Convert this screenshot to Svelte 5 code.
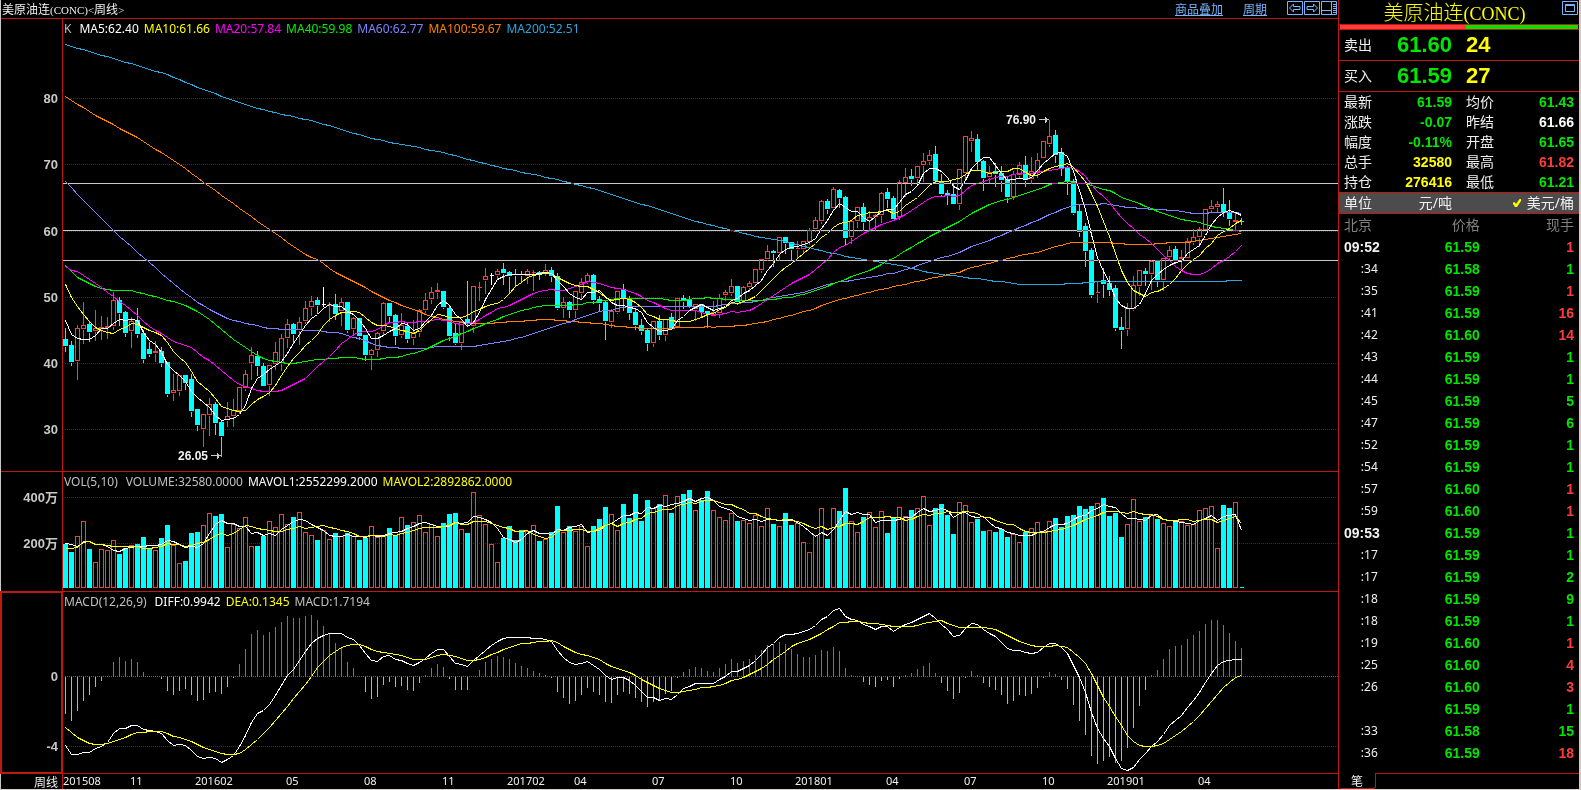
<script>
	const STEP = 6;
	const PRICE_TOP = 19;

	// one bar per week: direction (u, d, or w for unchanged), then high, body top, body bottom, low
	const bars = `
		d327,339,346,351 d340,345,362,365 u324,328,361,379 u301,325,329,343 d320,324,332,341 u309,328,331,340 u315,327,329,339
		u316,326,328,338 u291,300,326,329 d296,300,313,325 d310,312,333,336 u316,321,331,347 d307,320,334,337 d329,333,359,362
		d341,349,354,356 u340,351,353,361 d346,351,363,366 d362,362,394,396 u373,390,393,400 u375,375,391,395 d375,375,383,389
		d373,379,411,416 d408,409,425,430 u413,414,429,446 u397,404,415,435 d401,404,423,434 d420,422,436,456 u401,416,420,426
		u398,410,416,426 u387,387,411,413 u369,374,388,390 u346,355,363,379 d350,356,366,375 d362,366,386,386 u364,365,385,395
		u341,352,364,369 u333,338,363,370 u318,324,338,347 d322,324,334,342 u316,322,330,344 u300,308,321,323 u295,301,307,315
		d296,300,305,313 w286,304,304,306 u301,304,304,321 d293,304,314,319 u297,302,311,325 d301,302,330,332 u316,318,329,335
		d318,318,336,339 d334,335,355,360 u348,350,355,369 u331,333,350,356 u301,303,331,334 d303,303,316,321 d313,315,336,344
		u312,325,335,337 d321,326,339,342 u319,332,338,344 u308,310,332,336 u292,300,310,312 u286,292,299,303 u282,290,292,298
		d290,291,307,308 d304,308,336,340 d322,333,343,344 u320,321,343,349 d280,319,323,326 u285,286,326,332 u281,287,287,300
		u267,276,280,293 w272,275,275,284 u268,271,275,278 d262,269,273,284 d270,272,276,293 d268,274,275,286 d270,274,275,282
		u268,271,276,283 u269,272,272,290 d270,272,274,279 u263,270,273,275 d266,270,276,281 d272,276,308,309 u296,302,308,317
		d300,302,310,317 u291,291,310,317 u277,282,293,298 u272,275,282,283 d273,275,300,303 d295,299,303,310 d300,302,321,339
		u308,311,322,327 u291,291,312,313 d283,289,298,310 d295,298,313,319 d308,312,325,329 d318,325,331,334 d328,330,343,350
		u321,321,343,346 d314,321,335,339 u318,319,335,340 d312,317,328,329 u298,298,327,327 d294,298,301,308 d295,299,306,307
		u303,304,309,320 d303,304,312,316 d310,311,314,327 u300,312,316,316 u293,298,313,317 u289,292,295,300 u278,286,293,295
		d285,286,302,304 u285,287,301,302 u280,283,287,291 u269,269,283,286 u259,259,270,272 u244,251,259,260 d249,251,253,266
		u237,237,253,260 d237,237,243,253 d241,242,249,259 u240,248,249,257 u240,241,249,252 u227,230,242,244 u216,220,229,231
		u199,201,221,223 d198,201,209,213 u186,189,208,210 d188,190,198,207 d195,197,238,244 u219,221,237,243 u206,207,221,227
		d202,207,222,230 u210,217,221,230 u213,215,217,230 u191,193,215,222 d187,192,199,207 d195,198,219,219 u179,182,217,219
		u167,177,183,196 d168,176,179,185 u165,166,178,183 u152,161,165,181 u149,155,161,164 d145,154,181,182 d173,181,194,195
		d189,193,195,204 d183,194,204,204 u168,169,204,209 u135,136,173,180 u130,138,141,151 d133,139,162,169 d159,161,178,190
		u165,172,177,182 d162,171,174,186 d165,173,180,191 d175,179,197,202 u170,174,197,199 u161,165,175,177 d155,165,180,186
		u156,171,179,183 u152,160,172,177 u140,141,158,158 u119,136,144,146 d129,135,155,162 d147,152,168,175 d165,167,181,194
		d178,181,213,214 d203,211,232,236 d222,226,251,266 d247,250,295,297 u280,292,293,302 d267,280,284,297 d275,283,290,295
		d284,288,328,330 d316,327,330,348 u302,308,329,335 u275,285,309,310 u269,270,286,295 d267,271,274,285 u259,261,274,289
		d260,260,280,286 u258,258,280,290 u245,250,257,260 d245,249,261,263 u249,257,259,268 u237,241,258,258 u228,237,242,244
		u226,229,237,246 u208,209,230,230 u199,206,209,211 u200,204,207,212 d187,204,212,216 d199,212,219,225 u212,220,222,230
		d217,221,221,224`
		.trim()
		.split(/\s+/)
		.map((s) => {
			const [high, top, bottom, low] = s.slice(1).split(',').map(Number);
			return { dir: s[0], high, top, bottom, low };
		});

	// volume and MACD levels are stored at three units per pixel
	const volume = [
		222, 246, 199, 154, 237, 277, 238, 240, 211, 252, 234, 225, 222, 201, 236, 241, 204, 165, 226, 280, 273, 189, 186, 166, 130,
		138, 132, 232, 163, 175, 142, 229, 228, 198, 154, 172, 133, 163, 141, 127, 187, 196, 210, 180, 208, 189, 199, 189, 199, 210,
		204, 169, 202, 196, 174, 195, 142, 165, 157, 136, 187, 163, 199, 159, 132, 129, 178, 189, 67, 136, 163, 223, 277, 204, 168,
		210, 181, 182, 166, 213, 208, 186, 108, 187, 168, 184, 168, 229, 168, 147, 111, 133, 181, 102, 144, 72, 153, 90, 114, 102,
		76, 129, 79, 72, 60, 121, 90, 63, 121, 142, 151, 130, 153, 151, 160, 136, 169, 115, 162, 169, 129, 165, 160, 217, 247,
		196, 115, 207, 115, 123, 54, 154, 187, 141, 127, 172, 124, 189, 144, 112, 139, 120, 115, 79, 166, 114, 102, 135, 192, 97,
		106, 157, 147, 183, 181, 186, 177, 201, 193, 217, 186, 175, 157, 184, 154, 144, 171, 138, 135, 108, 117, 108, 100, 84, 138,
		129, 201, 163, 88, 154, 141, 136, 147, 160, 169, 153, 154, 166, 163, 121, 115, 109, 235, 105, 114, 97, 351
	];

	const macd = [
		729, 750, 720, 690, 672, 648, 630, 615, 573, 558, 570, 564, 573, 603, 615, 618, 624, 660, 672, 660, 654, 672, 690, 687, 666,
		663, 669, 648, 620, 579, 534, 489, 477, 492, 483, 468, 453, 435, 441, 441, 435, 432, 447, 465, 486, 516, 528, 573, 591, 618,
		663, 684, 678, 642, 633, 648, 645, 657, 660, 636, 612, 591, 579, 588, 624, 657, 657, 657, 618, 597, 573, 564, 555, 558, 564,
		576, 585, 591, 600, 606, 612, 621, 663, 681, 699, 690, 672, 651, 663, 672, 693, 696, 672, 663, 669, 681, 693, 708, 693, 690,
		669, 660, 620, 603, 594, 588, 591, 600, 603, 591, 579, 564, 576, 570, 564, 552, 537, 522, 519, 513, 519, 534, 549, 558, 558,
		552, 537, 540, 528, 540, 591, 612, 615, 633, 642, 648, 630, 627, 648, 624, 612, 606, 594, 585, 576, 606, 636, 660, 684, 666,
		621, 600, 612, 636, 648, 657, 672, 699, 690, 672, 675, 669, 651, 621, 603, 609, 627, 654, 702, 750, 792, 855, 879, 870, 858,
		876, 870, 831, 771, 705, 657, 612, 597, 564, 534, 525, 522, 504, 492, 480, 459, 447, 447, 462, 486, 510, 531
	];

	const diffKnots =
		'0:825 1:853 2:853 3:847 4:845 5:835 6:829 7:817 8:790 9:775 10:775 11:766 12:764 13:778 14:781 15:784 16:790 17:810 18:826 19:823 20:825 21:840 22:859 23:865 24:862 25:865 26:877 27:868 28:856 29:829 30:795 31:755 32:730 33:721 34:703 35:676 36:646 37:614 38:597 39:571 40:543 41:519 42:504 43:495 44:490 46:488 47:502 48:508 49:525 50:550 51:571 52:574 53:559 54:556 55:568 56:571 57:580 58:586 59:577 60:565 61:550 62:538 63:538 64:559 65:580 66:583 67:589 68:570 69:556 70:539 71:526 72:514 73:505 74:502 77:502 80:506 81:512 82:541 83:560 84:577 85:583 86:580 87:574 88:585 89:598 90:616 91:628 92:622 93:622 94:631 95:645 96:664 97:682 98:682 99:691 100:685 101:688 102:672 103:655 104:649 105:640 108:640 109:628 110:619 111:604 112:604 113:595 114:586 115:571 116:553 117:532 118:520 119:502 120:493 122:490 124:478 125:466 126:448 127:439 128:421 129:415 130:439 131:448 132:451 133:463 134:469 135:478 136:469 137:469 138:484 139:472 140:463 141:457 142:448 143:439 144:430 145:443 146:461 147:478 148:499 149:496 150:475 151:460 152:463 153:478 154:490 155:499 156:515 157:535 158:541 159:541 160:547 161:550 162:547 163:532 164:520 165:520 166:532 167:550 168:586 169:622 170:667 171:727 172:775 173:803 174:829 175:865 176:894 177:901 178:892 179:868 180:850 181:828 182:814 183:793 184:766 185:751 186:736 187:712 188:691 189:667 190:637 191:610 192:586 193:574 194:571 195:568 196:568';
	const deaKnots =
		'0:771 2:802 3:811 4:818 6:823 7:820 8:814 10:802 11:793 12:787 14:784 16:784 17:790 18:799 19:802 21:814 23:832 26:850 28:853 29:850 30:838 32:808 35:751 38:685 40:642 42:592 44:556 46:532 47:526 48:523 49:523 50:528 51:538 52:544 56:554 58:568 60:568 62:556 63:553 65:559 67:571 69:568 71:553 73:538 76:520 79:514 81:511 82:516 84:538 86:553 87:556 89:568 91:589 94:606 95:616 97:637 99:655 101:667 102:667 105:658 106:652 108:649 109:646 111:631 112:628 113:622 116:595 118:568 121:529 122:520 124:508 126:490 127:478 129:457 131:454 132:452 136:463 137:464 138:469 140:469 142:464 143:458 146:451 147:458 149:472 153:472 155:478 158:505 161:526 163:529 165:526 167:532 168:545 169:560 170:580 171:610 173:680 175:737 177:795 178:814 179:826 181:829 182:826 183:820 184:808 186:784 188:754 189:736 191:694 193:652 195:622 196:614';

	const px = (i) => 2 + i * STEP;

	// "index:level" pairs, straight lines between them
	function expand(knots) {
		const pts = knots.split(' ').map((k) => k.split(':').map(Number));
		const out = [];
		for (let k = 0; k < pts.length - 1; k++) {
			const [a, ya] = pts[k];
			const [b, yb] = pts[k + 1];
			for (let i = a; i < b; i++) out[i] = ya + ((yb - ya) * (i - a)) / (b - a);
		}
		out.push(pts[pts.length - 1][1]);
		return out;
	}

	// moving average; the lead-in covers weeks that lack enough history
	function average(values, n, leadIn) {
		const start = expand(leadIn);
		return values.map((_, i) => {
			if (i < n - 1) return start[i];
			let sum = 0;
			for (let j = i - n + 1; j <= i; j++) sum += values[j];
			return sum / n;
		});
	}

	function line(values, toY) {
		return values.map((v, i) => `${px(i)},${Math.round(toY(v))}`).join(' ');
	}

	const priceY = (v) => v - PRICE_TOP;
	const volumeY = (v) => v / 3 - 2;
	const macdY = (v) => v / 3 - 122;

	function wicks(dir) {
		return bars
			.map((b, i) =>
				b.dir === dir
					? `M${px(i)} ${priceY(b.high)}V${priceY(b.top)}M${px(i)} ${priceY(b.bottom)}V${priceY(b.low)}`
					: ''
			)
			.join('');
	}

	function bodies(dir) {
		return bars
			.map((b, i) =>
				b.dir === dir
					? `M${px(i) - 2} ${priceY(b.top)}H${px(i) + 2}V${priceY(Math.max(b.top, b.bottom - 1))}H${px(i) - 2}Z`
					: ''
			)
			.join('');
	}

	function volumeBars(down) {
		return volume
			.map((v, i) =>
				(bars[i].dir === 'd') === down
					? `M${px(i) - 2} ${Math.round(volumeY(v))}H${px(i) + 2}V115H${px(i) - 2}Z`
					: ''
			)
			.join('');
	}

	function macdBars(down) {
		return macd
			.map((v, i) => (v > 619 === down ? `M${px(i)} 84V${Math.round(macdY(v))}` : ''))
			.join('');
	}

	const closes = bars.map((b) => (b.dir === 'd' ? b.bottom : b.top));

	const averages = [
		{
			label: 'MA200:52.51',
			color: '#2aa5dc',
			points: line(
				expand(
					'0:44 4:51 8:58 13:67 17:74 20:82 24:91 28:100 31:106 36:114 41:120 46:129 51:138 56:144 63:152 71:165 84:182 89:190 104:219 112:231 116:237 120:241 123:246 128:253 132:258 139:265 144:272 150:277 157:282 159:284 164:284 168:283 173:281 190:281 196:280'
				),
				priceY
			)
		},
		{
			label: 'MA100:59.67',
			color: '#ff8000',
			points: line(
				average(closes, 100, '0:96 5:115 12:137 19:164 24:186 30:212 34:229 40:254 42:259 45:272 49:284 53:297 56:305 59:311 61:316 64:320 67:323 70:323 75:321 80:319 85:321 90:324 94:327 98:328'),
				priceY
			)
		},
		{
			label: 'MA60:62.77',
			color: '#8080ff',
			points: line(
				average(closes, 60, '0:181 4:206 8:230 10:241 14:262 18:283 22:302 26:315 28:320 32:325 34:328 38:329 42:330 46:333 50:340 52:345 56:348 58:348'),
				priceY
			)
		},
		{
			label: 'MA40:59.98',
			color: '#00f000',
			points: line(
				average(closes, 40, '0:265 1:271 2:277 4:283 6:288 8:290 11:290 15:296 19:303 20:305 22:311 24:319 26:329 28:339 30:347 32:355 34:360 36:362 38:363'),
				priceY
			)
		},
		{
			label: 'MA20:57.84',
			color: '#ff00ff',
			points: line(
				average(closes, 20, '0:266 1:270 2:271 4:279 6:287 8:296 10:305 12:315 14:326 16:333 18:341'),
				priceY
			)
		},
		{
			label: 'MA10:61.66',
			color: '#ffff00',
			points: line(average(closes, 10, '0:284 1:297 2:306 3:314 4:321 5:327 6:330 7:332 8:333'), priceY)
		},
		{
			label: 'MA5:62.40',
			color: '#ffffff',
			points: line(average(closes, 5, '0:320 1:334 2:338 3:339'), priceY)
		}
	];
	const legend = [...averages].reverse();

	const mavol1 = line(average(volume, 5, '0:220 1:222 2:228 3:215'), volumeY);
	const mavol2 = line(average(volume, 10, '0:235 1:235 2:230 3:214 4:214 5:221 6:223 7:225 8:228'), volumeY);
	const diff = line(expand(diffKnots), macdY);
	const dea = line(expand(deaKnots), macdY);

	const priceTicks = [
		{ label: '80', y: 79 },
		{ label: '70', y: 145 },
		{ label: '60', y: 212 },
		{ label: '50', y: 278 },
		{ label: '40', y: 344 },
		{ label: '30', y: 410 }
	];
	const levels = [164, 211, 241];
	const volumeTicks = [
		{ label: '400万', y: 25 },
		{ label: '200万', y: 71 }
	];
	const macdTicks = [
		{ label: '0', y: 84 },
		{ label: '-4', y: 154 }
	];
	const months = [
		['201508', 0], ['11', 67], ['201602', 132], ['05', 223], ['08', 301], ['11', 379], ['201702', 444], ['04', 511],
		['07', 589], ['10', 667], ['201801', 732], ['04', 823], ['07', 901], ['10', 979], ['201901', 1044], ['04', 1135]
	];

	const quotes = [
		['卖出', '61.60', '24'],
		['买入', '61.59', '27']
	];
	const stats = [
		['最新', '61.59', 'green', '均价', '61.43', 'green'],
		['涨跌', '-0.07', 'green', '昨结', '61.66', 'white'],
		['幅度', '-0.11%', 'green', '开盘', '61.65', 'green'],
		['总手', '32580', 'yellow', '最高', '61.82', 'red'],
		['持仓', '276416', 'yellow', '最低', '61.21', 'green']
	];
	const trades = [
		['09:52', '61.59', 1, 'red'],
		[':34', '61.58', 1, 'green'],
		[':35', '61.59', 1, 'red'],
		[':41', '61.59', 16, 'red'],
		[':42', '61.60', 14, 'red'],
		[':43', '61.59', 1, 'green'],
		[':44', '61.59', 1, 'green'],
		[':45', '61.59', 5, 'green'],
		[':47', '61.59', 6, 'green'],
		[':52', '61.59', 1, 'green'],
		[':54', '61.59', 1, 'green'],
		[':57', '61.60', 1, 'red'],
		[':59', '61.60', 1, 'red'],
		['09:53', '61.59', 1, 'green'],
		[':17', '61.59', 1, 'green'],
		[':17', '61.59', 2, 'green'],
		[':18', '61.59', 9, 'green'],
		[':18', '61.59', 1, 'green'],
		[':19', '61.60', 1, 'red'],
		[':25', '61.60', 4, 'red'],
		[':26', '61.60', 3, 'red'],
		['', '61.59', 1, 'green'],
		[':33', '61.58', 15, 'green'],
		[':36', '61.59', 18, 'red']
	];
</script>

<div class="terminal">
	<main class="chart">
		<header class="chart-head">
			<h1>美原油连<span class="latin">(CONC)&lt;</span>周线<span class="latin">&gt;</span></h1>
			<nav>
				<a href="#overlay">商品叠加</a>
				<a href="#period">周期</a>
				<div class="tools">
					<button aria-label="Previous">
						<svg width="16" height="14" viewBox="0 0 16 14"><path d="M.5 .5h15v13h-15zM2.500 7l4-4v2.500h6.500v3h-6.500v2.500z" /></svg>
					</button>
					<button aria-label="Next">
						<svg width="16" height="14" viewBox="0 0 16 14"><path d="M.5 .5h15v13h-15zM13.500 7l-4-4v2.500h-6.500v3h6.500v2.500z" /></svg>
					</button>
					<button aria-label="Layout">
						<svg width="16" height="14" viewBox="0 0 16 14"><path d="M.5 .5h15v13h-15zM10.500 0v14M0 9.500h10M12 3.500h3M12 5.500h3M12 7.500h3M12 9.500h3M12 11.500h3" /></svg>
					</button>
				</div>
			</nav>
		</header>

		<section class="pane">
			<svg class="axis" height="452">
				{#each priceTicks as t}
					<text x="57" y={t.y + 5}>{t.label}</text>
				{/each}
			</svg>
			<div class="plot">
				<svg class="canvas" height="452">
					<g transform="translate(0.5 0.5)">
						{#each priceTicks as t}
							<line class="grid" x1="1" x2="100%" y1={t.y} y2={t.y} />
						{/each}
						<path class="up" d={wicks('u') + bodies('u')} />
						<path class="down" d={wicks('d') + bodies('d')} />
						<path class="flat" d={wicks('w') + bodies('w')} />
						{#each averages as a}
							<polyline points={a.points} stroke={a.color} />
						{/each}
						<path class="pointer" d="M147 436h10m-2 -2v4m-1 -5v6M975 100h10m-2 -2v4m-1 -5v6" />
						{#each levels as y}
							<line class="level" x1="-1" x2="100%" y1={y} y2={y} />
						{/each}
					</g>
					<text class="mark" x="145" y="441">26.05</text>
					<text class="mark" x="973" y="105">76.90</text>
				</svg>
				<div class="legend">
					<span class="grey first">K</span>
					{#each legend as a}
						<span style="color: {a.color}">{a.label}</span>
					{/each}
				</div>
			</div>
		</section>

		<section class="pane">
			<svg class="axis" height="119">
				{#each volumeTicks as t}
					<text x="57" y={t.y + 5}>{t.label}</text>
				{/each}
			</svg>
			<div class="plot">
				<svg class="canvas" height="119">
					<g transform="translate(0.5 0.5)">
						{#each volumeTicks as t}
							<line class="grid" x1="1" x2="100%" y1={t.y} y2={t.y} />
						{/each}
						<path class="up" d={volumeBars(false)} />
						<path class="down" d={volumeBars(true)} />
						<polyline points={mavol1} stroke="#ffffff" />
						<polyline points={mavol2} stroke="#ffff00" />
					</g>
				</svg>
				<div class="legend">
					<span class="grey first">VOL(5,10)</span>
					<span class="grey">VOLUME:32580.0000</span>
					<span class="white">MAVOL1:2552299.2000</span>
					<span class="yellow">MAVOL2:2892862.0000</span>
				</div>
			</div>
		</section>

		<section class="pane">
			<svg class="axis selected" height="181">
				{#each macdTicks as t}
					<text x="57" y={t.y + 5}>{t.label}</text>
				{/each}
			</svg>
			<div class="plot">
				<svg class="canvas" height="181">
					<g transform="translate(0.5 0.5)">
						<line class="grid zero" x1="1" x2="100%" y1="84" y2="84" />
						<line class="grid" x1="1" x2="100%" y1="154" y2="154" />
						<path class="up" d={macdBars(false)} />
						<path class="down" d={macdBars(true)} />
						<polyline points={diff} stroke="#ffffff" />
						<polyline points={dea} stroke="#ffff00" />
					</g>
				</svg>
				<div class="legend">
					<span class="grey first">MACD(12,26,9)</span>
					<span class="white">DIFF:0.9942</span>
					<span class="yellow">DEA:0.1345</span>
					<span class="grey">MACD:1.7194</span>
				</div>
			</div>
		</section>

		<footer class="pane times">
			<div class="period">周线</div>
			<svg class="canvas" height="15">
				{#each months as [label, x]}
					<text {x} y="11">{label}</text>
				{/each}
			</svg>
		</footer>
	</main>

	<aside class="quote">
		<header class="quote-head">
			<h2>美原油连<span class="latin">(CONC)</span></h2>
			<button aria-label="Restore window">
				<svg width="16" height="14" viewBox="0 0 16 14"><path d="M.5 .5h15v13h-15zM3.500 3.500h9v7h-9zM3 4.500h10" /></svg>
			</button>
		</header>
		<div class="ratio"><span class="sell"></span><span class="buy"></span></div>

		{#each quotes as [label, price, size]}
			<div class="level-row">
				<span class="name">{label}</span>
				<strong class="green">{price}</strong>
				<strong class="yellow">{size}</strong>
			</div>
		{/each}

		<table class="stats">
			<tbody>
				{#each stats as [a, av, ac, b, bv, bc]}
					<tr>
						<th scope="row">{a}</th>
						<td class={ac}>{av}</td>
						<th scope="row">{b}</th>
						<td class={bc}>{bv}</td>
					</tr>
				{/each}
			</tbody>
		</table>

		<div class="units">
			<span>单位</span>
			<button>元/吨</button>
			<button aria-pressed="true">
				<svg width="8" height="8" viewBox="0 0 8 8"><path d="M0 3.500l1.500-.5 1.500 2 3.500-5h1.500v2l-4 6h-2l-2-3z" /></svg>
				美元/桶
			</button>
		</div>

		<table class="trades">
			<thead>
				<tr><th>北京</th><th>价格</th><th>现手</th></tr>
			</thead>
			<tbody>
				{#each trades as [time, price, lots, color]}
					<tr>
						<td><span class:minute={time.length > 3} class="time">{time}</span></td>
						<td class="green">{price}</td>
						<td class={color}>{lots}</td>
					</tr>
				{/each}
			</tbody>
		</table>

		<footer class="tabs">
			<button>笔</button>
			<div class="rest"></div>
		</footer>
	</aside>
</div>

<style>
	:global(body) {
		background: #000;
	}

	.terminal {
		display: grid;
		grid-template-columns: minmax(0, 1fr) 243px;
		border-left: 1px solid #c8c8c8;
		border-bottom: 1px solid #d8d0d0;
		background: #000;
		color: #f0f0f0;
		font-family: 'Noto Sans', 'Noto Sans CJK SC', sans-serif;
		font-size: 12px;
	}

	h1,
	h2 {
		margin: 0;
		font-weight: normal;
		white-space: nowrap;
	}

	button {
		padding: 0;
		border: 0;
		background: none;
		color: inherit;
		font: inherit;
		cursor: pointer;
	}

	svg {
		display: block;
	}

	.green {
		color: #00e600;
	}

	.yellow {
		color: #ffff00;
	}

	.red {
		color: #ff3c3c;
	}

	.white {
		color: #ffffff;
	}

	.grey {
		color: #c0c0c0;
	}

	.latin {
		font-family: 'Liberation Serif', serif;
	}

	/* chart side */

	.chart-head {
		display: flex;
		justify-content: space-between;
		height: 18px;
		border-bottom: 1px solid #c01810;
		line-height: 18px;
	}

	h1 {
		padding-left: 1px;
		font-family: 'Noto Sans CJK SC', sans-serif;
		font-size: 12px;
	}

	h1 .latin {
		font-size: 11px;
	}

	nav {
		display: flex;
		gap: 20px;
	}

	nav a {
		color: #78b4ff;
		font-family: 'Noto Sans CJK SC', sans-serif;
	}

	.tools {
		display: flex;
		gap: 1px;
		padding: 1px 1px 0 0;
	}

	.tools button,
	.quote-head button {
		height: 14px;
	}

	.tools path,
	.quote-head path {
		fill: none;
		stroke: #78b4ff;
	}

	.pane {
		display: grid;
		grid-template-columns: 61px minmax(0, 1fr);
		border-bottom: 1px solid #c01810;
	}

	.axis {
		width: 61px;
		box-sizing: border-box;
		fill: #c8c8c8;
		font: bold 13px 'Liberation Sans', 'Noto Sans CJK SC', sans-serif;
		text-anchor: end;
	}

	.axis.selected {
		outline: 2px solid #c01810;
		outline-offset: -1px;
	}

	.plot {
		display: grid;
		border-left: 1px solid #c01810;
	}

	.canvas,
	.legend {
		grid-area: 1 / 1;
	}

	.canvas {
		width: 100%;
		overflow: hidden;
	}

	.canvas g {
		fill: none;
		shape-rendering: crispEdges;
	}

	.grid {
		stroke: #900808;
		stroke-dasharray: 1 1;
	}

	.grid.zero {
		stroke: #ff2020;
	}

	.level {
		stroke: #c8c8c8;
		mix-blend-mode: difference;
	}

	.up {
		stroke: #ff3c3c;
	}

	.down {
		fill: #00ffff;
		stroke: #00ffff;
	}

	.flat {
		stroke: #ffffff;
	}

	.pointer {
		stroke: #c8c8c8;
	}

	.mark {
		fill: #f0f0f0;
		font: bold 12px 'Liberation Sans', sans-serif;
		text-anchor: end;
	}

	.legend {
		display: flex;
		gap: 5px;
		align-self: start;
		padding-left: 1px;
		line-height: 20px;
		white-space: nowrap;
	}

	.legend .first {
		padding-right: 3px;
	}

	.times {
		border-bottom: 0;
	}

	.times .canvas {
		grid-area: auto;
		box-sizing: border-box;
		border-left: 1px solid #c01810;
		fill: #f0f0f0;
		font-size: 11px;
	}

	.period {
		padding-right: 4px;
		font-family: 'Noto Sans CJK SC', sans-serif;
		line-height: 15px;
		text-align: right;
	}

	/* quote side */

	.quote {
		display: flex;
		flex-direction: column;
		border-left: 1px solid #c01810;
		border-right: 2px solid #d8c8c8;
		font-size: 14px;
	}

	.quote-head {
		display: flex;
		align-items: flex-start;
		height: 24px;
		border-bottom: 1px solid #c01810;
	}

	h2 {
		flex: 1;
		padding-left: 8px;
		color: #ffff00;
		font-family: 'Noto Sans CJK SC', sans-serif;
		font-size: 20px;
		font-weight: 300;
		line-height: 24px;
		text-align: center;
	}

	h2 .latin {
		font-size: 18px;
	}

	.quote-head button {
		margin: 1px 1px 0 0;
	}

	.ratio {
		display: flex;
		height: 4px;
		padding: 0 1px;
		border-bottom: 1px solid #c01810;
	}

	.sell {
		flex: 53;
		background: #ff3c3c;
	}

	.buy {
		flex: 47;
		background: #00e600;
	}

	.level-row {
		display: grid;
		grid-template-columns: 28px 80px 1fr;
		height: 30px;
		padding: 0 5px;
		border-bottom: 1px solid #c01810;
		line-height: 30px;
	}

	.level-row strong {
		font-family: 'Liberation Sans', sans-serif;
		font-size: 22px;
		text-align: right;
	}

	.level-row strong:last-child {
		padding-left: 14px;
		text-align: left;
	}

	table {
		border-collapse: collapse;
	}

	th,
	td {
		padding: 0;
	}

	th {
		font-weight: normal;
		text-align: left;
	}

	td {
		font-family: 'Liberation Sans', sans-serif;
		font-weight: bold;
		text-align: right;
	}

	.stats {
		width: 230px;
		margin: 0 5px;
		table-layout: fixed;
	}

	.stats th {
		width: 42px;
	}

	.stats tr {
		height: 20px;
		line-height: 20px;
	}

	.stats td:nth-child(2) {
		width: 66px;
		padding-right: 14px;
	}

	.units {
		display: grid;
		grid-template-columns: 28px 80px 1fr;
		height: 20px;
		padding: 0 5px;
		border: solid #c01810;
		border-width: 1px 0;
		background: #4c4c4c;
		line-height: 20px;
	}

	.units button {
		display: flex;
		gap: 6px;
		align-items: center;
		justify-content: flex-end;
	}

	.units path {
		fill: #ffff00;
	}

	.trades {
		margin: 0 5px;
		table-layout: fixed;
	}

	.trades tr {
		height: 22px;
		line-height: 22px;
	}

	.trades th {
		color: #808080;
		text-align: right;
	}

	.trades th:first-child {
		width: 35px;
		text-align: left;
	}

	.trades th:nth-child(2) {
		width: 100px;
	}

	.trades .time {
		display: block;
		font: 12px/22px 'Noto Sans', sans-serif;
		padding-right: 2px;
	}

	.trades .time.minute {
		font: bold 14px/22px 'Liberation Sans', sans-serif;
		padding-right: 0;
	}

	.tabs {
		display: flex;
		height: 16px;
		margin-top: auto;
	}

	.tabs button {
		width: 37px;
		border: solid #c01810;
		border-width: 0 1px 1px 0;
		border-radius: 0 0 3px 3px;
		font-family: 'Noto Sans CJK SC', sans-serif;
		font-size: 12px;
		line-height: 15px;
	}

	.rest {
		flex: 1;
		border-top: 1px solid #c01810;
	}
</style>
